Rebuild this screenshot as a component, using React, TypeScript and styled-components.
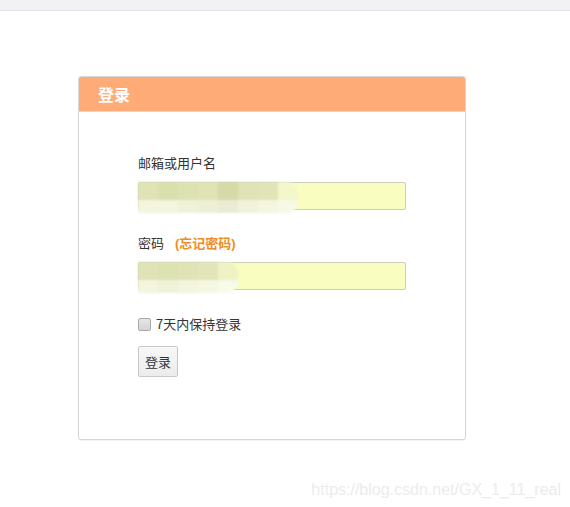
import React from 'react';
import styled, { createGlobalStyle } from 'styled-components';

const GlobalStyle = createGlobalStyle`
    html, body {
        margin: 0;
        padding: 0;
        background: #ffffff;
    }
    body {
        font-family: "Noto Sans CJK SC", "Liberation Sans", sans-serif;
        font-size: 13px;
        color: #333333;
    }
`;

const TopBar = styled.div`
    height: 10px;
    background-color: #f2f2f4;
    border-bottom: 1px solid #e2e2e4;
`;

const Page = styled.div`
    position: relative;
    height: 496px;
    padding: 65px 0 0 78px;
    box-sizing: border-box;
`;

const Panel = styled.div`
    width: 388px;
    box-sizing: border-box;
    border: 1px solid #d6d6d6;
    border-radius: 3px;
    background: #ffffff;
    box-shadow: 0 1px 1px rgba(0, 0, 0, 0.05);
    overflow: hidden;
`;

const PanelHeading = styled.div`
    height: 34px;
    background-color: #ffab78;
    border-bottom: 1px solid #dcdcdc;
    padding-left: 19px;
    display: flex;
    align-items: center;
    color: #ffffff;
    font-size: 16px;
    font-weight: bold;
`;

const PanelBody = styled.form`
    padding: 41px 59px 62px;
    display: flex;
    flex-direction: column;
`;

const Label = styled.label<{ $gap?: number }>`
    height: 20px;
    line-height: 20px;
    overflow: hidden;
    margin-top: ${(p) => p.$gap ?? 0}px;
    font-size: 13px;
    color: #333;
`;

const Forgot = styled.a`
    font-family: "Liberation Sans", "Noto Sans CJK SC", sans-serif;
    line-height: 20px;
    color: #f08c23;
    font-weight: bold;
    text-decoration: none;
    margin-left: 11px;
`;

const Field = styled.div`
    position: relative;
    margin-top: 9px;
    width: 268px;
    height: 28px;
`;

const Input = styled.input`
    width: 100%;
    height: 100%;
    box-sizing: border-box;
    border: 1px solid #cfcfc0;
    border-radius: 2px;
    background-color: #fafdc0;
    outline: none;
    padding: 0 6px;
`;

const Mosaic = styled.div<{ $cols: number }>`
    position: absolute;
    left: 0;
    top: 0;
    display: grid;
    grid-template-columns: repeat(${(p) => p.$cols}, 20px);
    grid-template-rows: 18px 13px;
    filter: blur(1.2px);
    border-radius: 0 12px 12px 0;
    overflow: hidden;
    pointer-events: none;
`;

const Cell = styled.div<{ $c: string }>`
    background-color: ${(p) => p.$c};
`;

const CheckRow = styled.label`
    display: flex;
    align-items: center;
    gap: 5px;
    margin-top: 24px;
    height: 20px;
    line-height: 20px;
`;

const Check = styled.span`
    width: 11px;
    height: 11px;
    border: 1px solid #a9a9a9;
    border-radius: 2px;
    background: linear-gradient(#e6e6e6, #d4d4d4);
`;

const Button = styled.button`
    margin-top: 12px;
    width: 40px;
    height: 31px;
    align-self: flex-start;
    border: 1px solid #c8c8c8;
    border-radius: 2px;
    background: linear-gradient(#f7f7f7, #ececec);
    font-family: inherit;
    font-size: 13px;
    color: #333;
    padding: 0;
`;

const Watermark = styled.div`
    position: absolute;
    right: 9px;
    bottom: 8px;
    font-family: "Liberation Sans", sans-serif;
    font-size: 16px;
    color: #ececec;
`;

const userTop = ['#dfe3b5', '#dadfae', '#dde2b2', '#dfe3b5', '#d6d9a8', '#dfe3b5', '#e0e4b6', '#f3f7cc'];
const userBottom = ['#f3f5dd', '#f3f5dd', '#f0f2d8', '#eef0d6', '#e9ecd2', '#f0f2da', '#f4f6e0', '#f7f9e6'];
const passTop = ['#dfe3b5', '#dde2b2', '#dfe3b5', '#e2e5b9', '#eef2c4'];
const passBottom = ['#f3f5dd', '#f0f2d8', '#f3f5dd', '#f5f7e2', '#f8faea'];

const Blur: React.FC<{ top: string[]; bottom: string[] }> = ({ top, bottom }) => (
    <Mosaic $cols={top.length}>
        {top.map((c, i) => (
            <Cell key={'t' + i} $c={c} />
        ))}
        {bottom.map((c, i) => (
            <Cell key={'b' + i} $c={c} />
        ))}
    </Mosaic>
);

const App: React.FC = () => {
    return (
        <>
            <GlobalStyle />
            <TopBar />
            <Page>
                <Panel>
                    <PanelHeading>登录</PanelHeading>
                    <PanelBody onSubmit={(e) => e.preventDefault()}>
                        <Label>邮箱或用户名</Label>
                        <Field>
                            <Input type="text" />
                            <Blur top={userTop} bottom={userBottom} />
                        </Field>
                        <Label $gap={23}>
                            密码<Forgot href="#">(忘记密码)</Forgot>
                        </Label>
                        <Field>
                            <Input type="password" />
                            <Blur top={passTop} bottom={passBottom} />
                        </Field>
                        <CheckRow>
                            <Check />
                            7天内保持登录
                        </CheckRow>
                        <Button type="submit">登录</Button>
                    </PanelBody>
                </Panel>
                <Watermark>https://blog.csdn.net/GX_1_11_real</Watermark>
            </Page>
        </>
    );
};

export default App;
